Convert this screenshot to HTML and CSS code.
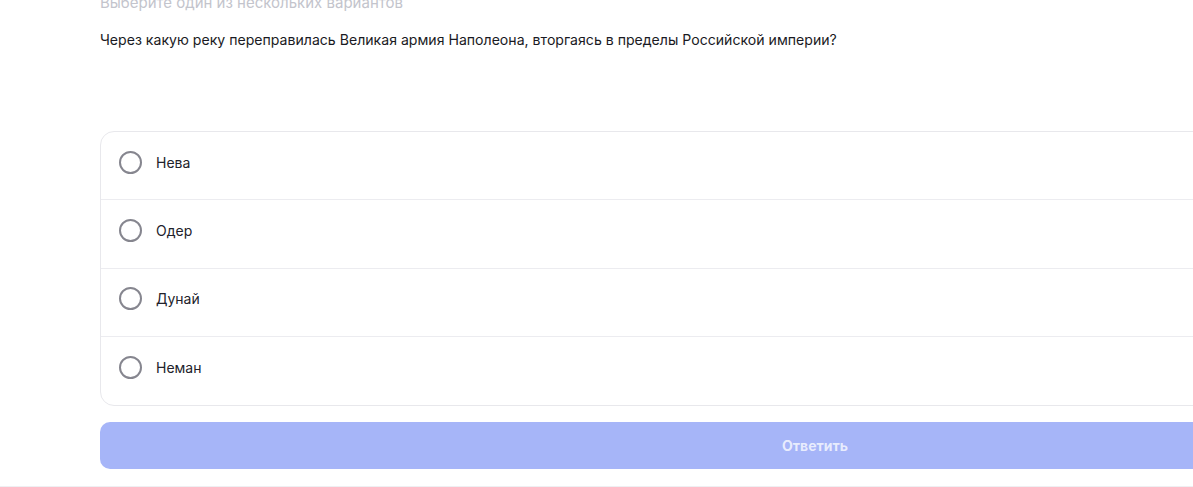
FILE: index.html
```html
<!DOCTYPE html>
<html lang="ru">
<head>
    <meta charset="UTF-8">
    <meta name="viewport" content="width=device-width, initial-scale=1.0">
    <title>Вопрос</title>
    <link rel="stylesheet" href="styles.css">
</head>
<body>
    <div class="quiz">
        <div class="quiz-inner">
            <p class="quiz-hint">Выберите один из нескольких вариантов</p>
            <p class="quiz-question">Через какую реку переправилась Великая армия Наполеона, вторгаясь в пределы Российской империи?</p>

            <form class="quiz-form">
                <div class="options">
                    <label class="option">
                        <input type="radio" name="answer">
                        <span class="radio"></span>
                        <span class="option-text">Нева</span>
                    </label>
                    <label class="option">
                        <input type="radio" name="answer">
                        <span class="radio"></span>
                        <span class="option-text">Одер</span>
                    </label>
                    <label class="option">
                        <input type="radio" name="answer">
                        <span class="radio"></span>
                        <span class="option-text">Дунай</span>
                    </label>
                    <label class="option">
                        <input type="radio" name="answer">
                        <span class="radio"></span>
                        <span class="option-text">Неман</span>
                    </label>
                </div>

                <button type="submit" class="answer-button" disabled>Ответить</button>
            </form>
        </div>
    </div>
</body>
</html>
```

FILE: styles.css
```css
* {
    margin: 0;
    padding: 0;
    box-sizing: border-box;
}

html, body {
    height: 100%;
}

body {
    font-family: Inter, "Noto Sans", sans-serif;
    background: #fff;
    color: #1f1f29;
    overflow: hidden;
}

/* блок вопроса */
.quiz {
    display: flow-root;
    height: 487px;
    border-bottom: 1px solid #efeff2;
    padding-left: 100px;
}

.quiz-inner {
    width: 1430px;
    margin-top: -7px;
}

.quiz-hint {
    font-size: 15px;
    line-height: 20px;
    color: #c3c4cc;
}

.quiz-question {
    margin-top: 17px;
    font-size: 14.1px;
    line-height: 20px;
    color: #1a1a23;
}

.quiz-form {
    margin-top: 81px;
}

.options {
    border: 1px solid #e8e8ec;
    border-radius: 14px;
    overflow: hidden;
}

.option {
    display: flex;
    align-items: center;
    gap: 14px;
    height: 68.25px;
    padding-left: 18px;
    padding-bottom: 7px;
    border-bottom: 1px solid #ececf0;
    cursor: pointer;
}

.option:last-child {
    border-bottom: none;
}

.option input {
    display: none;
}

.radio {
    width: 23px;
    height: 23px;
    border: 2px solid #86868f;
    border-radius: 50%;
    flex-shrink: 0;
}

.option-text {
    font-size: 14px;
    color: #22222b;
}

.answer-button {
    display: block;
    width: 100%;
    height: 47px;
    margin-top: 16px;
    border: none;
    border-radius: 10px;
    background: #a6b5f8;
    color: rgba(255, 255, 255, 0.75);
    font-family: Inter, "Noto Sans", sans-serif;
    font-size: 14px;
    font-weight: 700;
}
```
